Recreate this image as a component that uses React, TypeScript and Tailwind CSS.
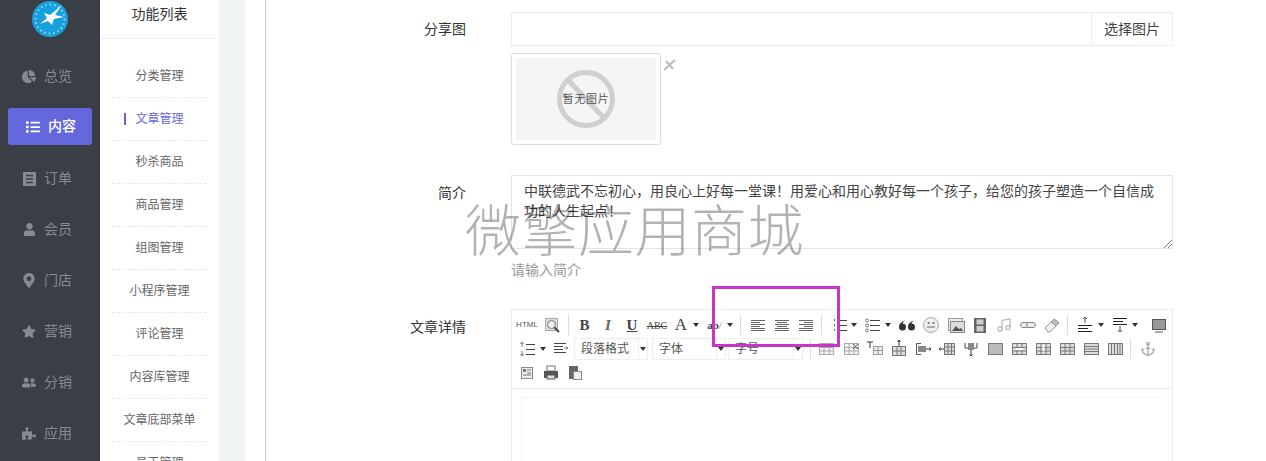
import type { ReactNode } from 'react';
import { Anchor, Music } from 'lucide-react';
import {
  FaChartPie,
  FaList,
  FaMapMarkerAlt,
  FaPuzzlePiece,
  FaStar,
  FaUser,
  FaUserFriends,
} from 'react-icons/fa';

const FONT = "font-['Liberation_Sans','Noto_Sans_CJK_SC',sans-serif]";

const OrderIcon = () => (
  <svg width="13" height="14" viewBox="0 0 13 14">
    <rect width="13" height="14" rx="1" fill="currentColor" />
    <path d="M3 3.5h7M3 7h7M3 10.5h7" stroke="#3a3e47" strokeWidth="1.4" />
  </svg>
);

const sideItems = [
  { label: '总览', icon: <FaChartPie size={15} /> },
  { label: '内容', icon: <FaList size={14} />, active: true },
  { label: '订单', icon: <OrderIcon /> },
  { label: '会员', icon: <FaUser size={13} /> },
  { label: '门店', icon: <FaMapMarkerAlt size={15} /> },
  { label: '营销', icon: <FaStar size={15} /> },
  { label: '分销', icon: <FaUserFriends size={15} /> },
  { label: '应用', icon: <FaPuzzlePiece size={15} /> },
];

const subItems = [
  { label: '分类管理' },
  { label: '文章管理', active: true },
  { label: '秒杀商品' },
  { label: '商品管理' },
  { label: '组图管理' },
  { label: '小程序管理' },
  { label: '评论管理' },
  { label: '内容库管理' },
  { label: '文章底部菜单' },
  { label: '员工管理' },
];

function Svg({ children }: { children: ReactNode }) {
  return (
    <svg width="20" height="20" viewBox="0 0 20 20" fill="none" stroke="#555" strokeWidth="1">
      {children}
    </svg>
  );
}

function Lines({ rows }: { rows: [number, number, number][] }) {
  return (
    <Svg>
      {rows.map(([x1, x2, y]) => (
        <line key={y} x1={x1} x2={x2} y1={y + 0.5} y2={y + 0.5} stroke="#666" />
      ))}
    </Svg>
  );
}

function TableIcon({ children, dark }: { children?: ReactNode; dark?: boolean }) {
  const c = dark ? '#777' : '#aaa';
  return (
    <Svg>
      <rect x="3.5" y="4.5" width="14" height="11" fill={dark ? '#ddd' : '#f4f4f4'} stroke={c} />
      <path d="M3.5 8.5h14M3.5 12h14M8 4.5v11M13 4.5v11" stroke={c} />
      {children}
    </Svg>
  );
}

const alignLeft = <Lines rows={[[3, 17, 5], [3, 12, 7], [3, 17, 9], [3, 12, 11], [3, 17, 13], [3, 17, 15]]} />;
const alignCenter = <Lines rows={[[3, 17, 5], [5, 15, 7], [3, 17, 9], [5, 15, 11], [3, 17, 13], [3, 17, 15]]} />;
const alignRight = <Lines rows={[[3, 17, 5], [8, 17, 7], [3, 17, 9], [8, 17, 11], [3, 17, 13], [3, 17, 15]]} />;

const Caret = () => <span className="h-0 w-0 border-x-[3px] border-t-[4px] border-x-transparent border-t-[#333]" />;

function Slot({ w, children }: { w: number; children?: ReactNode }) {
  return (
    <div className="flex h-6 shrink-0 items-center justify-center" style={{ width: w }}>
      {children}
    </div>
  );
}

const Sep = () => <div className="mx-[1px] h-5 w-px shrink-0 bg-[#ddd]" />;

function Select({ label, w }: { label: string; w: number }) {
  return (
    <div
      className="flex h-[22px] shrink-0 items-center border border-[#eee] text-[12px] leading-none text-[#555]"
      style={{ width: w }}
    >
      <span className="flex-1 pl-[6px]">{label}</span>
      <span className="flex h-full w-[9px] items-center justify-center border-l border-[#eee]">
        <Caret />
      </span>
    </div>
  );
}

function Logo() {
  return (
    <svg width="36" height="36" viewBox="0 0 36 36">
      <circle cx="18" cy="18" r="18" fill="#16a0dc" />
      <circle cx="18" cy="18" r="14.5" fill="none" stroke="#9fd8f2" strokeWidth="2" strokeDasharray="1.5 3" />
      <path d="M30 4 L23 14 L32 16 L22 18 L20 24 L16 20 L8 23 L15 17 L12 12 L18 14 Z" fill="#fff" />
    </svg>
  );
}

function Toolbar() {
  return (
    <div className="flex h-[79px] flex-col border-b border-[#eee] pt-[3px] pl-[3px]">
      <div className="flex items-center">
        <Slot w={24}>
          <span className="text-[8px] text-[#555]">HTML</span>
        </Slot>
        <Slot w={25}>
          <Svg>
            <rect x="3.5" y="3.5" width="12" height="12" fill="#ddd" stroke="#aaa" />
            <circle cx="9.5" cy="9.5" r="4" fill="#eee" stroke="#777" />
            <path d="M12.5 12.5L17 17" stroke="#444" strokeWidth="2" />
          </Svg>
        </Slot>
        <Slot w={3} />
        <Sep />
        <Slot w={3} />
        <Slot w={23}>
          <span className="font-['Liberation_Serif',serif] text-[15px] font-bold text-[#444]">B</span>
        </Slot>
        <Slot w={24}>
          <span className="font-['Liberation_Serif',serif] text-[15px] font-bold text-[#666] italic">I</span>
        </Slot>
        <Slot w={24}>
          <span className="font-['Liberation_Serif',serif] text-[15px] font-bold text-[#444] underline">U</span>
        </Slot>
        <Slot w={26}>
          <span className="font-['Liberation_Serif',serif] text-[10px] text-[#444] line-through">ABC</span>
        </Slot>
        <Slot w={22}>
          <span className="font-['Liberation_Serif',serif] text-[17px] text-[#444]">A</span>
        </Slot>
        <Slot w={8}>
          <Caret />
        </Slot>
        <Slot w={2} />
        <Slot w={25}>
          <span className="font-['Liberation_Serif',serif] text-[11px] font-bold text-[#444]">
            ab<span className="font-normal text-[#888]">/</span>
          </span>
        </Slot>
        <Slot w={6}>
          <Caret />
        </Slot>
        <Slot w={6} />
        <Sep />
        <Slot w={4} />
        <Slot w={24}>{alignLeft}</Slot>
        <Slot w={24}>{alignCenter}</Slot>
        <Slot w={24}>{alignRight}</Slot>
        <Slot w={2} />
        <Sep />
        <Slot w={27}>
          <Svg>
            <path d="M7.5 4v2M7.5 9v2M7.5 14v2" stroke="#666" />
            <path d="M12 5.5h8M12 10.5h8M12 15.5h8" stroke="#444" />
          </Svg>
        </Slot>
        <Slot w={8}>
          <Caret />
        </Slot>
        <Slot w={5} />
        <Slot w={20}>
          <Svg>
            <circle cx="4" cy="5.5" r="1.5" stroke="#777" />
            <circle cx="4" cy="10.5" r="1.5" stroke="#777" />
            <circle cx="4" cy="15.5" r="1.5" stroke="#777" />
            <path d="M7 5.5h10M7 10.5h10M7 15.5h10" stroke="#444" />
          </Svg>
        </Slot>
        <Slot w={1} />
        <Slot w={8}>
          <Caret />
        </Slot>
        <Slot w={3} />
        <Slot w={24}>
          <Svg>
            <path d="M9 5C6 6 2 8 2 12a3.5 3.5 0 1 0 3.5-3.5C5.5 7.5 7 6 9 5ZM18 5c-3 1-7 3-7 7a3.5 3.5 0 1 0 3.5-3.5C14.5 7.5 16 6 18 5Z" fill="#333" stroke="none" />
          </Svg>
        </Slot>
        <Slot w={24}>
          <Svg>
            <circle cx="10" cy="10" r="7.5" fill="#eee" stroke="#aaa" />
            <circle cx="7.5" cy="8" r="1" fill="#666" stroke="none" />
            <circle cx="12.5" cy="8" r="1" fill="#666" stroke="none" />
            <path d="M6 12h8" stroke="#666" />
          </Svg>
        </Slot>
        <Slot w={25}>
          <Svg>
            <rect x="2.5" y="3.5" width="14" height="12" fill="#eee" stroke="#999" />
            <rect x="4.5" y="6.5" width="14" height="11" fill="#ddd" stroke="#888" />
            <path d="M6 16l4-5 3 3 2-1 2 3Z" fill="#555" stroke="none" />
          </Svg>
        </Slot>
        <Slot w={24}>
          <Svg>
            <rect x="4" y="3" width="12" height="15" fill="#666" stroke="none" />
            <rect x="6.5" y="4.5" width="7" height="5" fill="#ccc" stroke="none" />
            <rect x="6.5" y="11" width="7" height="5.5" fill="#ccc" stroke="none" />
          </Svg>
        </Slot>
        <Slot w={24}>
          <Music size={16} color="#bbb" />
        </Slot>
        <Slot w={24}>
          <Svg>
            <rect x="2.5" y="7.5" width="9" height="5" rx="2.5" fill="#eee" stroke="#888" />
            <rect x="8.5" y="7.5" width="9" height="5" rx="2.5" fill="#eee" stroke="#888" />
          </Svg>
        </Slot>
        <Slot w={24}>
          <Svg>
            <path d="M3 13l9-9 5 4-9 9H6Z" fill="#eee" stroke="#999" />
            <path d="M12 4l5 4-3 3-5-4Z" fill="#bbb" stroke="#999" />
          </Svg>
        </Slot>
        <Slot w={2} />
        <Sep />
        <Slot w={4} />
        <Slot w={24}>
          <Svg>
            <path d="M10 2v6M8 4l2-2 2 2" stroke="#555" />
            <path d="M3 10.5h14M3 13.5h10M3 16.5h14" stroke="#222" />
          </Svg>
        </Slot>
        <Slot w={7}>
          <Caret />
        </Slot>
        <Slot w={4} />
        <Slot w={24}>
          <Svg>
            <path d="M3 3.5h14M3 6.5h10M3 9.5h14" stroke="#222" />
            <path d="M10 11v6M8 15l2 2 2-2" stroke="#555" />
          </Svg>
        </Slot>
        <Slot w={6}>
          <Caret />
        </Slot>
        <Slot w={9} />
        <Slot w={24}>
          <Svg>
            <rect x="3.5" y="4.5" width="13" height="10" fill="#999" stroke="#555" />
            <path d="M6 17h8" stroke="#555" />
          </Svg>
        </Slot>
      </div>

      <div className="flex items-center">
        <Slot w={24}>
          <Svg>
            <path d="M5 3v5M3.5 5L5 3l1.5 2M5 12v5M3.5 15L5 17l1.5-2" stroke="#777" />
            <path d="M9 5.5h9M9 10.5h9M9 15.5h9" stroke="#444" />
          </Svg>
        </Slot>
        <Slot w={8}>
          <Caret />
        </Slot>
        <Slot w={2} />
        <Slot w={24}>
          <Svg>
            <path d="M3 4.5h12M3 7.5h9M3 10.5h9M3 13.5h12" stroke="#444" />
            <path d="M13 9h4M15.5 7.5L17 9l-1.5 1.5" stroke="#777" />
          </Svg>
        </Slot>
        <Slot w={1} />
        <Select label="段落格式" w={74} />
        <div className="w-1 shrink-0" />
        <Select label="字体" w={74} />
        <div className="w-[2px] shrink-0" />
        <Select label="字号" w={75} />
        <Slot w={6} />
        <Sep />
        <Slot w={2} />
        <Slot w={24}>
          <TableIcon />
        </Slot>
        <Slot w={25}>
          <TableIcon>
            <path d="M12 5l5 5M17 5l-5 5" stroke="#555" />
          </TableIcon>
        </Slot>
        <Slot w={24}>
          <Svg>
            <path d="M2 3h6M5 3v6" stroke="#333" />
            <rect x="8.5" y="7.5" width="9" height="8" fill="#eee" stroke="#999" />
            <path d="M8.5 11.5h9M13 7.5v8" stroke="#999" />
          </Svg>
        </Slot>
        <Slot w={24}>
          <Svg>
            <rect x="3.5" y="7.5" width="13" height="9" fill="#ddd" stroke="#777" />
            <path d="M3.5 12h13M8 7.5v9M12 7.5v9" stroke="#777" />
            <path d="M10 1v6M8.5 3L10 1l1.5 2" stroke="#333" />
          </Svg>
        </Slot>
        <Slot w={24}>
          <Svg>
            <path d="M8 4.5H3.5v11H8" stroke="#555" />
            <rect x="5" y="7" width="8" height="6" fill="#888" stroke="none" />
            <path d="M13 10h5M16.5 8.5L18 10l-1.5 1.5" stroke="#333" />
          </Svg>
        </Slot>
        <Slot w={24}>
          <Svg>
            <rect x="7.5" y="4.5" width="10" height="11" fill="#ddd" stroke="#777" />
            <path d="M11 4.5v11M14.5 4.5v11M7.5 8h10M7.5 12h10" stroke="#777" />
            <path d="M2 10h5M3.5 8.5L2 10l1.5 1.5" stroke="#333" />
          </Svg>
        </Slot>
        <Slot w={24}>
          <Svg>
            <path d="M4 4v5h12V4" stroke="#444" />
            <rect x="7" y="4" width="6" height="7" fill="#888" stroke="none" />
            <path d="M10 11v6M8.5 15.5L10 17l1.5-1.5" stroke="#333" />
          </Svg>
        </Slot>
        <Slot w={24}>
          <Svg>
            <rect x="3.5" y="4.5" width="14" height="11" fill="#bbb" stroke="#777" />
          </Svg>
        </Slot>
        <Slot w={24}>
          <TableIcon dark>
            <path d="M7 10h7" stroke="#fff" strokeWidth="2" />
          </TableIcon>
        </Slot>
        <Slot w={24}>
          <TableIcon dark>
            <path d="M10.5 6v6" stroke="#fff" strokeWidth="2" />
          </TableIcon>
        </Slot>
        <Slot w={24}>
          <TableIcon dark />
        </Slot>
        <Slot w={24}>
          <Svg>
            <rect x="3.5" y="4.5" width="14" height="11" fill="#ddd" stroke="#777" />
            <path d="M3.5 7.5h14M3.5 10h14M3.5 12.5h14" stroke="#777" />
          </Svg>
        </Slot>
        <Slot w={24}>
          <Svg>
            <rect x="3.5" y="4.5" width="14" height="11" fill="#ddd" stroke="#777" />
            <path d="M6.5 4.5v11M9.5 4.5v11M12.5 4.5v11M15 4.5v11" stroke="#777" />
          </Svg>
        </Slot>
        <Slot w={2} />
        <Sep />
        <Slot w={32}>
          <Anchor size={16} color="#aaa" />
        </Slot>
      </div>

      <div className="flex items-center">
        <Slot w={24}>
          <Svg>
            <rect x="4.5" y="4.5" width="11" height="11" fill="#eee" stroke="#888" />
            <rect x="6" y="6" width="3" height="3" fill="#777" stroke="none" />
            <path d="M10 7h4M10 10h4M6 12h8" stroke="#777" />
          </Svg>
        </Slot>
        <Slot w={24}>
          <Svg>
            <rect x="6" y="3" width="8" height="5" fill="#fff" stroke="#777" />
            <rect x="3" y="8" width="14" height="7" fill="#555" stroke="none" />
            <rect x="6" y="12" width="8" height="4" fill="#ddd" stroke="#555" />
          </Svg>
        </Slot>
        <Slot w={24}>
          <Svg>
            <rect x="4" y="3" width="9" height="13" fill="#666" stroke="none" />
            <rect x="8.5" y="8.5" width="8" height="8" fill="#eee" stroke="#888" />
          </Svg>
        </Slot>
      </div>
    </div>
  );
}

function FormRow({ label, labelClass, children }: { label: string; labelClass: string; children: ReactNode }) {
  return (
    <div className="flex">
      <div className={`w-[200px] shrink-0 text-right text-[14px] text-[#333] ${labelClass}`}>{label}</div>
      <div className="ml-[45px] w-[662px] shrink-0">{children}</div>
    </div>
  );
}

export default function App() {
  return (
    <div className={`relative flex h-[461px] w-[1266px] overflow-hidden bg-white ${FONT}`}>
      <aside className="w-[100px] shrink-0 bg-[#3a3e47]">
        <div className="flex h-[57px] justify-center pt-px">
          <Logo />
        </div>
        <div className="flex flex-col gap-[14px] px-2">
          {sideItems.map((item) => (
            <div
              key={item.label}
              className={`flex h-[37px] items-center gap-2 rounded-[3px] text-[14px] ${
                item.active ? 'bg-[#6568dc] pl-[18px] font-medium text-white' : 'pt-0.5 pl-[14px] text-[#868b93]'
              }`}
            >
              <span className="flex w-[14px] justify-center">{item.icon}</span>
              <span>{item.label}</span>
            </div>
          ))}
        </div>
      </aside>

      <nav className="w-[120px] shrink-0 border-r border-[#f4f4f4]">
        <div className="flex h-[39px] justify-center border-b border-[#eee] pt-[3px] text-[14px] leading-[22px] text-[#333]">
          功能列表
        </div>
        <div className="px-3 pt-4">
          {subItems.map((item) => (
            <div
              key={item.label}
              className={`relative flex h-[43px] items-center justify-center border-b border-dashed border-[#e8e8e8] text-[12px] ${
                item.active ? 'text-[#6568dc]' : 'text-[#666]'
              }`}
            >
              {item.active && <span className="absolute top-[15px] left-3 h-3 w-0.5 bg-[#6568dc]" />}
              {item.label}
            </div>
          ))}
        </div>
      </nav>

      <div className="w-[25px] shrink-0 bg-[#f1f4f5]" />

      <main className="ml-5 flex-1 border-l border-[#ccc] pt-3">
        <FormRow label="分享图" labelClass="pt-[7px] leading-5">
          <div className="flex h-[34px] border border-[#eee]">
            <div className="flex-1" />
            <div className="flex w-[81px] items-center justify-center border-l border-[#eee] text-[14px] text-[#444]">
              选择图片
            </div>
          </div>
          <div className="mt-[7px] flex items-start">
            <div className="relative h-[92px] w-[150px] rounded-[3px] border border-[#ddd] p-1">
              <div className="flex h-full items-center justify-center bg-[#f5f5f5]">
                <svg width="60" height="60" viewBox="0 0 60 60">
                  <circle cx="30" cy="30" r="26.5" fill="none" stroke="#cfcfcf" strokeWidth="5" />
                  <path d="M12 11L48 49" stroke="#cfcfcf" strokeWidth="5" />
                </svg>
                <span className="absolute text-[11px] tracking-[0.7px] text-[#555]">暂无图片</span>
              </div>
            </div>
            <svg width="14" height="14" viewBox="0 0 14 14" className="mt-1 ml-[2px]">
              <path d="M1 13L12 3M3 4L10 12" stroke="#bbb" strokeWidth="2" />
            </svg>
          </div>
        </FormRow>

        <div className="mt-[30px]">
          <FormRow label="简介" labelClass="pt-2 leading-5">
            <div className="relative h-[74px] border border-[#e5e5e5] px-3 py-[5px] text-[14px] leading-[20px] text-[#444]">
              中联德武不忘初心，用良心上好每一堂课！用爱心和用心教好每一个孩子，给您的孩子塑造一个自信成功的人生起点！
              <svg width="8" height="8" viewBox="0 0 8 8" className="absolute right-0 bottom-0">
                <path d="M0 8L8 0M4 8L8 4" stroke="#777" />
              </svg>
            </div>
            <div className="mt-[11px] text-[14px] leading-5 text-[#999]">请输入简介</div>
          </FormRow>
        </div>

        <div className="mt-[29px]">
          <FormRow label="文章详情" labelClass="pt-2 leading-5">
            <div className="h-[200px] border border-[#eee]">
              <Toolbar />
              <div className="mx-[9px] mt-2 h-[100px] border-t border-l border-[#f4f4f4]" />
            </div>
          </FormRow>
        </div>
      </main>

      {/* watermark and annotation sit over the form */}
      <div className="pointer-events-none absolute top-[197px] left-[465px] text-[56px] leading-[70px] font-light tracking-[0.5px] whitespace-nowrap text-black/30">
        微擎应用商城
      </div>
      <div className="pointer-events-none absolute top-[286px] left-[712px] h-[61px] w-[128px] border-[3px] border-[#c637c9]" />
    </div>
  );
}
